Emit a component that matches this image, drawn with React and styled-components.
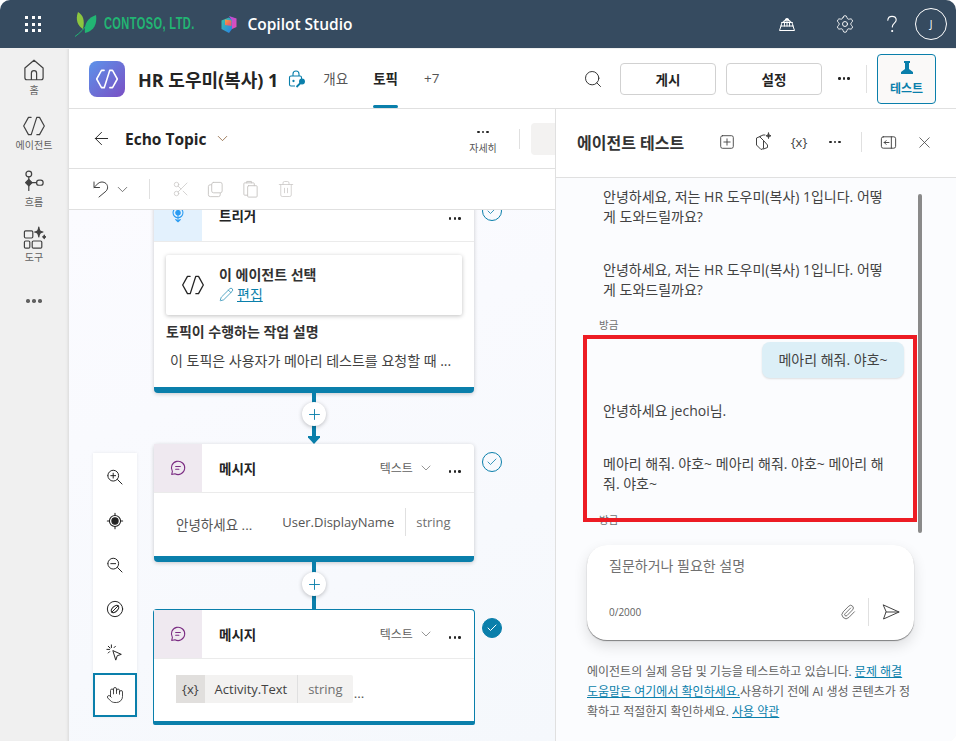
import React from 'react';
import styled, { createGlobalStyle } from 'styled-components';
import { ArrowLeft, ChevronDown, Search, X, Scissors, Trash2, Settings, Paperclip, Pencil, Plus, Check, Hand } from 'lucide-react';

const teal = '#0a7fab';

const GlobalStyle = createGlobalStyle`
  html, body { margin: 0; padding: 0; background: #fff; }
  body { font-family: "Open Sans", "Noto Sans CJK KR", sans-serif; color: #242424; }
  * { box-sizing: border-box; }
`;

const Shell = styled.div`
  width: 956px;
  height: 741px;
  display: flex;
  flex-direction: column;
  overflow: hidden;
  border-radius: 10px 10px 8px 0;
  background: #f0f0f0;
`;

const TopBar = styled.header`
  height: 48px;
  flex: none;
  background: #364b60;
  display: flex;
  align-items: center;
  color: #fff;
  padding-left: 25px;
`;

const Waffle = styled.div`
  display: grid;
  grid-template-columns: repeat(3, 3px);
  gap: 3.5px;
  margin-right: 34px;
  i { width: 3px; height: 3px; background: #fff; }
`;

const Contoso = styled.span`
  font-family: "Liberation Sans", sans-serif;
  font-weight: 700;
  font-size: 17px;
  letter-spacing: 0.6px;
  color: #22b573;
  margin: 0 -23px 0 7px;
  white-space: nowrap;
  transform: scaleX(0.65);
  transform-origin: left center;
`;

const Product = styled.span`
  font-size: 15.5px;
  font-weight: 600;
  margin-left: 8px;
  white-space: nowrap;
`;

const TopIcons = styled.div`
  margin-left: auto;
  display: flex;
  align-items: center;
  padding-right: 9px;
`;

const TopIcon = styled.span`
  width: ${p => p.$w}px;
  height: 32px;
  display: flex;
  align-items: center;
  justify-content: center;
`;

const Avatar = styled.span`
  width: 32px;
  height: 32px;
  border-radius: 50%;
  border: 1px solid #fff;
  display: flex;
  align-items: center;
  justify-content: center;
  font-size: 10px;
`;

const Body = styled.div`
  flex: 1;
  min-height: 0;
  display: flex;
  margin-top: 1px;
`;

const Rail = styled.nav`
  width: 69px;
  flex: none;
  display: flex;
  flex-direction: column;
  align-items: center;
  box-shadow: inset -3px 0 3px -2px #d8d8d8;
`;

const RailItem = styled.div`
  height: 56px;
  width: 100%;
  display: flex;
  flex-direction: column;
  align-items: center;
  justify-content: center;
  gap: 1px;
  font-size: 10px;
  line-height: 13px;
  color: #616161;
  padding-right: 1px;
`;

const Main = styled.main`
  flex: 1;
  min-width: 0;
  display: flex;
  flex-direction: column;
  background: #fff;
`;

const AgentBar = styled.div`
  height: 60px;
  flex: none;
  display: flex;
  align-items: center;
  border-bottom: 1px solid #e0e0e0;
  padding: 0 20px;
`;

const AgentLogo = styled.div`
  width: 36px;
  height: 36px;
  border-radius: 8px;
  background: linear-gradient(135deg, #5c93ea, #7a4fc4);
  display: flex;
  align-items: center;
  justify-content: center;
  flex: none;
`;

const AgentTitle = styled.h1`
  margin: 0 0 0 13px;
  font-size: 18px;
  font-weight: 700;
  white-space: nowrap;
  color: #242424;
`;

const Tab = styled.div`
  height: 59px;
  display: flex;
  align-items: center;
  position: relative;
  font-size: 13.5px;
  margin-left: ${p => p.$gap}px;
  font-weight: ${p => (p.$active ? 700 : 400)};
  color: ${p => (p.$active ? '#242424' : '#555')};
  padding-bottom: 2px;
  ${p => p.$active && `&::after {
    content: '';
    position: absolute;
    left: 0;
    right: 0;
    bottom: 0;
    height: 3px;
    border-radius: 2px;
    background: ${teal};
  }`}
`;

const BarSpacer = styled.div`
  flex: 1;
`;

const OutlineButton = styled.button`
  width: 96px;
  height: 32px;
  margin-left: 10px;
  border: 1px solid #d1d1d1;
  border-radius: 4px;
  background: #fff;
  font: 700 13.5px "Open Sans", "Noto Sans CJK KR", sans-serif;
  color: #242424;
  &:first-of-type { margin-left: 17px; }
`;

const Dots = styled.span`
  display: inline-flex;
  gap: ${p => p.$gap || 2.2}px;
  i {
    width: ${p => p.$size || 2.6}px;
    height: ${p => p.$size || 2.6}px;
    border-radius: 50%;
    background: ${p => p.$color || '#242424'};
  }
`;

const MoreSlot = styled.span`
  width: 44px;
  display: flex;
  justify-content: center;
  flex: none;
`;

const VRule = styled.span`
  width: 1px;
  height: ${p => p.$h || 20}px;
  background: #e0e0e0;
  flex: none;
  margin: ${p => p.$m || 0};
`;

const TestButton = styled.button`
  width: 59px;
  height: 50px;
  margin-left: 10px;
  border: 1px solid ${teal};
  border-radius: 4px;
  background: #faf9f8;
  display: flex;
  flex-direction: column;
  align-items: center;
  justify-content: center;
  gap: 3px;
  padding: 0;
  color: ${teal};
  font: 700 12px "Open Sans", "Noto Sans CJK KR", sans-serif;
`;

const Split = styled.div`
  flex: 1;
  min-height: 0;
  display: flex;
`;

const Editor = styled.section`
  width: 487px;
  flex: none;
  display: flex;
  flex-direction: column;
  border-right: 1px solid #e0e0e0;
  min-width: 0;
`;

const EchoBar = styled.div`
  height: 60px;
  flex: none;
  display: flex;
  align-items: center;
  padding-left: 22px;
  border-bottom: 1px solid #e0e0e0;
  overflow: hidden;
`;

const EchoTitle = styled.span`
  font-size: 15.5px;
  font-weight: 700;
  margin: 0 7px 0 13px;
  color: #242424;
`;

const Details = styled.div`
  margin: 8px 16px 0 auto;
  width: 40px;
  display: flex;
  flex-direction: column;
  align-items: center;
  gap: 9px;
  font-size: 10px;
  line-height: 12px;
  color: #555;
`;

const GhostBox = styled.div`
  width: 24px;
  height: 32px;
  margin-left: 11px;
  border-radius: 4px 0 0 4px;
  background: #f3f2f1;
  flex: none;
`;

const EditBar = styled.div`
  height: 41px;
  flex: none;
  display: flex;
  align-items: center;
  padding-left: 22px;
  border-bottom: 1px solid #e0e0e0;
  color: #c8c6c4;
  svg { flex: none; }
`;

const EditSlot = styled.span`
  width: 35px;
  display: flex;
  justify-content: center;
`;

const Canvas = styled.div`
  flex: 1;
  position: relative;
  overflow: hidden;
  background: linear-gradient(160deg, #fbfbff, #f5f8fc);
`;

const Node = styled.article`
  position: absolute;
  left: ${p => p.$x}px;
  top: ${p => p.$y}px;
  width: ${p => (p.$selected ? 322 : 320)}px;
  height: ${p => p.$h}px;
  background: #fff;
  border-radius: 4px;
  border-bottom: 6px solid ${teal};
  box-shadow: 0 1px 4px rgba(0, 0, 0, 0.2);
  ${p => p.$selected && `border: 1px solid ${teal}; border-bottom-width: 4px; border-radius: 4px 4px 2px 2px; box-shadow: none;`}
`;

const NodeHead = styled.div`
  height: ${p => p.$h || 49}px;
  display: flex;
  align-items: center;
  border-bottom: 1px solid #ebebeb;
  padding-right: 13px;
  font-size: 13.5px;
  font-weight: 700;
`;

const NodeIcon = styled.div`
  width: 48px;
  height: 100%;
  flex: none;
  margin-right: 17px;
  display: flex;
  align-items: center;
  justify-content: center;
  background: ${p => p.$bg};
`;

const NodeType = styled.span`
  margin-left: auto;
  display: flex;
  align-items: center;
  gap: 5px;
  font-size: 12px;
  font-weight: 400;
  color: #616161;
  margin-right: 15px;
`;

const HeadMore = styled.span`
  margin-left: ${p => (p.$auto ? 'auto' : 0)};
`;

const AgentCard = styled.div`
  margin: 13px 12px 0;
  height: 60px;
  display: flex;
  align-items: center;
  padding-left: 15px;
  gap: 14px;
  box-shadow: 0 1px 4px rgba(0, 0, 0, 0.25);
  border-radius: 2px;
`;

const CardName = styled.div`
  font-size: 14px;
  font-weight: 700;
  line-height: 20px;
  color: #333;
  margin-top: -1px;
`;

const EditLink = styled.a`
  display: flex;
  align-items: center;
  gap: 3px;
  font-size: 14px;
  line-height: 20px;
  color: ${teal};
  text-decoration: underline;
`;

const DescTitle = styled.div`
  margin: 8px 12px 0;
  font-size: 14px;
  font-weight: 700;
  color: #333;
  line-height: 18px;
`;

const DescText = styled.div`
  margin: 11px 16px 0;
  font-size: 14px;
  line-height: 18px;
  color: #424242;
  white-space: nowrap;
`;

const MessageRow = styled.div`
  display: flex;
  align-items: center;
  height: 62px;
  padding-left: 22px;
  font-size: 13.5px;
  color: #555;
`;

const VarName = styled.span`
  margin-left: 30px;
  margin-top: -5px;
  white-space: nowrap;
  font-size: 13px;
`;

const VarType = styled.span`
  margin-left: 11px;
  margin-top: -5px;
  padding-left: 10px;
  height: 28px;
  line-height: 28px;
  border-left: 1px solid #e0e0e0;
  color: #707070;
  font-size: 13px;
`;

const Pill = styled.div`
  display: flex;
  align-items: stretch;
  height: 28px;
  margin-top: -3px;
  background: #f3f2f1;
  border-radius: 2px;
  line-height: 28px;
  font-size: 13px;
`;

const PillPart = styled.span`
  padding: 0 ${p => (p.$dark ? 6 : 10)}px;
  color: ${p => (p.$muted ? '#707070' : '#424242')};
  background: ${p => (p.$dark ? '#e1dfdd' : 'transparent')};
  border-left: ${p => (p.$rule ? '1px solid #e0e0e0' : 0)};
`;

const Trail = styled.span`
  margin: 6px 0 0 1px;
`;

const Wire = styled.div`
  position: absolute;
  left: ${p => p.$x}px;
  top: ${p => p.$y}px;
  width: 4px;
  height: ${p => p.$h}px;
  background: ${teal};
`;

const WireHead = styled.div`
  position: absolute;
  left: 239px;
  top: 226px;
  width: 12px;
  height: 8px;
  background: ${teal};
  clip-path: polygon(0 0, 100% 0, 100% 20%, 50% 100%, 0 20%);
`;

const AddButton = styled.div`
  position: absolute;
  left: ${p => p.$x}px;
  top: ${p => p.$y}px;
  width: 24px;
  height: 24px;
  border-radius: 50%;
  background: #fff;
  box-shadow: 0 1px 4px rgba(0, 0, 0, 0.25);
  display: flex;
  align-items: center;
  justify-content: center;
  color: ${teal};
`;

const Status = styled.div`
  position: absolute;
  left: ${p => p.$x}px;
  top: ${p => p.$y}px;
  width: 20px;
  height: 20px;
  border-radius: 50%;
  border: 1.5px solid ${teal};
  background: ${p => (p.$filled ? teal : 'transparent')};
  color: ${p => (p.$filled ? '#fff' : teal)};
  display: flex;
  align-items: center;
  justify-content: center;
`;

const ZoomTools = styled.div`
  position: absolute;
  left: 24px;
  top: 243px;
  width: 44px;
  background: #fff;
  box-shadow: 0 0 3px rgba(0, 0, 0, 0.08);
`;

const ZoomButton = styled.div`
  height: 44px;
  display: flex;
  align-items: center;
  justify-content: center;
  padding-top: ${p => (p.$active ? 0 : 4)}px;
  border: ${p => (p.$active ? `2px solid ${teal}` : 0)};
`;

const TestPanel = styled.aside`
  flex: 1;
  min-width: 0;
  position: relative;
  display: flex;
  flex-direction: column;
  background: #fbfcfe;
  overflow: hidden;
`;

const TestHead = styled.div`
  height: 69px;
  flex: none;
  display: flex;
  align-items: center;
  padding: 0 0 2px 20px;
  background: #fff;
  border-bottom: 1px solid #e0e0e0;
`;

const TestTitle = styled.h2`
  margin: 0 17px 0 1px;
  font-size: 16px;
  font-weight: 700;
  color: #333;
  white-space: nowrap;
  width: 115px;
`;

const HeadSlot = styled.span`
  width: 36px;
  display: flex;
  justify-content: center;
  align-items: center;
  font-size: 13px;
  color: #424242;
`;

const Messages = styled.div`
  flex: 1;
  min-height: 0;
  overflow: hidden;
  padding: 9px 46px 0 47px;
  font-size: 14px;
  line-height: 20px;
  color: #424242;
`;

const BotText = styled.p`
  margin: 0 0 ${p => p.$after}px;
  width: 290px;
`;

const Stamp = styled.div`
  font-size: 10.5px;
  line-height: 14px;
  color: #707070;
  margin-left: -4px;
`;

const UserBubble = styled.div`
  width: 142px;
  height: 36px;
  margin: 10px 0 23px 159px;
  background: #dceff7;
  border-radius: 8px;
  display: flex;
  align-items: center;
  justify-content: center;
  box-shadow: 0 1px 2px rgba(0, 0, 0, 0.12);
  white-space: nowrap;
`;

const RedFrame = styled.div`
  position: absolute;
  left: 27px;
  top: 226px;
  width: 334px;
  height: 187px;
  border: 4px solid #ed1c24;
`;

const Thumb = styled.div`
  position: absolute;
  right: 34px;
  top: 85px;
  width: 4px;
  height: 339px;
  border-radius: 2px;
  background: #8a8a8a;
`;

const Composer = styled.div`
  flex: none;
  width: 327px;
  height: 95px;
  margin: 0 0 0 31px;
  background: #fff;
  border-radius: 20px;
  box-shadow: 0 1px 1px rgba(0, 0, 0, 0.45), 0 6px 14px rgba(0, 0, 0, 0.12);
  padding: 11px 13px 0 22px;
  display: flex;
  flex-direction: column;
`;

const Placeholder = styled.div`
  font-size: 14px;
  line-height: 20px;
  color: #707070;
`;

const ComposerFoot = styled.div`
  display: flex;
  align-items: center;
  margin-top: 22px;
  font-size: 10px;
  color: #616161;
  gap: 12px;
`;

const Count = styled.span`
  margin-right: auto;
`;

const Disclaimer = styled.p`
  flex: none;
  margin: 22px 0 19px 31px;
  width: 326px;
  font-size: 12px;
  line-height: 20px;
  color: #616161;
  a { color: ${teal}; text-decoration: underline; }
`;

const Glyph = ({ d, size = 20, color = 'currentColor', sw = 1.2, children, fill = 'none' }) => (
  <svg width={size} height={size} viewBox="0 0 20 20" fill={fill} stroke={color} strokeWidth={sw} strokeLinecap="round" strokeLinejoin="round">
    {d && <path d={d} />}
    {children}
  </svg>
);

const ThreeDots = ({ size, color, gap }) => (
  <Dots $size={size} $color={color} $gap={gap}><i /><i /><i /></Dots>
);

const AgentGlyph = ({ size = 20, color = '#242424', sw = 1.3 }) => (
  <Glyph size={size} color={color} sw={sw}>
    <path d="M7.600 2.800H5.400L1.400 10l4 7.200h2.200M12.400 2.800h2.200l4 7.200-4 7.200h-2.200M12.300 2.800 7.700 17.200" />
  </Glyph>
);

const MessageGlyph = () => (
  <Glyph size={18} color="#7b2d83" sw={1.2}>
    <path d="M3 17.200 3.800 13.800A7.400 7.400 0 1 1 6.600 16.400Z" />
    <path d="M7.400 8.300h5.200M7.400 11.300h3.600" />
  </Glyph>
);

const Copilot = () => (
  <svg width="19" height="19" viewBox="0 0 19 19">
    <defs>
      <linearGradient id="cpA" x1="0" y1="0" x2="1" y2="1"><stop offset="0" stopColor="#f2a33a" /><stop offset="1" stopColor="#e8477e" /></linearGradient>
      <linearGradient id="cpB" x1="0" y1="0" x2="1" y2="1"><stop offset="0" stopColor="#b14de0" /><stop offset="1" stopColor="#e64fb0" /></linearGradient>
      <linearGradient id="cpC" x1="0" y1="0" x2="1" y2="1"><stop offset="0" stopColor="#35c6a8" /><stop offset="1" stopColor="#2a7fe6" /></linearGradient>
    </defs>
    <path d="M9 1 16.500 3.500V12L12 14V6Z" fill="url(#cpB)" />
    <path d="M1.500 5.500 9 2.500 12 5V14L9 18 1.500 14Z" fill="url(#cpC)" />
    <path d="M5 4.500 11.500 5.500 11.500 11 5 10Z" fill="url(#cpA)" />
  </svg>
);

const Leaf = () => (
  <svg width="22" height="25" viewBox="0 0 22 25">
    <path d="M3 0c5 3 7 8 5 17C3 14 0 8 3 0Z" fill="#8cc63f" />
    <path d="M21 3c1.500 10-3 16-11 18-1-8 2-15 11-18Z" fill="#22b573" />
    <path d="M0 24.500C5 21 10 16 14 10" stroke="#22b573" strokeWidth="1" fill="none" />
  </svg>
);

export default function App() {
  return (
    <>
      <GlobalStyle />
      <Shell>
        <TopBar>
          <Waffle>{Array.from({ length: 9 }, (_, i) => <i key={i} />)}</Waffle>
          <Leaf />
          <Contoso>CONTOSO, LTD.</Contoso>
          <Copilot />
          <Product>Copilot Studio</Product>
          <TopIcons>
            <TopIcon $w={69}>
              <Glyph size={20} color="#fff" sw={1}>
                <path d="M4 12a6 6 0 1 1 12 0" />
                <path d="M10 6c-2.800 0-2.800 6-2.400 6M10 6c2.800 0 2.800 6 2.400 6M10 6v6" transform="translate(0 -3) scale(1 1.250)" />
                <path d="M4.600 8.500h10.800M4 12h12" />
                <path d="M4 12 2.500 16.500h15L16 12" />
              </Glyph>
            </TopIcon>
            <TopIcon $w={47}><Settings size={20} strokeWidth={1.1} /></TopIcon>
            <TopIcon $w={47}>
              <Glyph size={20} color="#fff" sw={1.1}>
                <path d="M5.800 6.300C6 3.800 7.800 2.400 10 2.400c2.400 0 4.200 1.600 4.200 3.700 0 3-3.900 3.200-3.900 6.800" />
                <circle cx="10.200" cy="17" r=".5" fill="#fff" />
              </Glyph>
            </TopIcon>
            <Avatar>J</Avatar>
          </TopIcons>
        </TopBar>

        <Body>
          <Rail>
            <RailItem>
              <Glyph size={26} color="#424242" sw={0.95} d="M8 17.500v-5a2 2 0 0 1 4 0v5M3 8.500 10 2.500l7 6v7.500a1.500 1.500 0 0 1-1.500 1.500h-11A1.500 1.500 0 0 1 3 16Z" />
              <span>홈</span>
            </RailItem>
            <RailItem>
              <AgentGlyph size={24} color="#424242" sw={1} />
              <span>에이전트</span>
            </RailItem>
            <RailItem>
              <Glyph size={26} color="#424242" sw={0.95}>
                <circle cx="6" cy="3.800" r="2.200" />
                <path d="M6 6v2M6 13v3.500" />
                <path d="M6 8l2.500 2.500L6 13l-2.500-2.500Z" fill="#424242" />
                <rect x="12" y="8.500" width="5" height="4" rx="1.800" />
                <path d="M8.500 10.500H12" />
              </Glyph>
              <span>흐름</span>
            </RailItem>
            <RailItem>
              <Glyph size={24} color="#424242" sw={1}>
                <rect x="2" y="4" width="7" height="6" rx="1" />
                <rect x="2" y="12.500" width="4.500" height="6" rx="1" />
                <rect x="8.500" y="12.500" width="8" height="6" rx="1" />
                <path d="M14 1c.4 3 1 3.700 3.500 4-2.500.4-3.100 1-3.500 4-.4-3-1-3.600-3.500-4 2.500-.3 3.100-1 3.500-4Z" fill="#424242" />
                <path d="M18.500 7.500c.2 1 .5 1.300 1.300 1.500-.8.2-1.100.5-1.300 1.500-.2-1-.5-1.300-1.300-1.500.8-.2 1.100-.5 1.300-1.500Z" fill="#424242" />
              </Glyph>
              <span>도구</span>
            </RailItem>
            <RailItem><ThreeDots size={3.400} gap={2.500} color="#616161" /></RailItem>
          </Rail>

          <Main>
            <AgentBar>
              <AgentLogo><AgentGlyph size={24} color="#fff" sw={1.3} /></AgentLogo>
              <AgentTitle>HR 도우미(복사) 1</AgentTitle>
              <svg width="18" height="18" viewBox="0 0 18 18" style={{ marginLeft: 10, flex: 'none' }} fill="none" stroke={teal} strokeWidth="1.1">
                <path d="M5 6V4a3 3 0 0 1 6 0v2" />
                <path d="M7 16H3a1.500 1.500 0 0 1-1.500-1.500v-7A1.500 1.500 0 0 1 3 6h9a1.500 1.500 0 0 1 1.500 1.500V9" />
                <circle cx="5.500" cy="11" r=".6" fill={teal} />
                <circle cx="14" cy="11.500" r="2.400" fill={teal} />
                <path d="M12.500 13 8.500 17" strokeWidth="1.800" />
              </svg>
              <Tab $gap={17}>개요</Tab>
              <Tab $gap={25} $active>토픽</Tab>
              <Tab $gap={26}>+7</Tab>
              <BarSpacer />
              <Search size={20} strokeWidth={1.1} color="#242424" />
              <OutlineButton>게시</OutlineButton>
              <OutlineButton>설정</OutlineButton>
              <MoreSlot><ThreeDots /></MoreSlot>
              <VRule $h={28} />
              <TestButton>
                <svg width="14" height="15" viewBox="0 0 14 15" fill={teal}>
                  <path d="M4 0h6v2H9v6l4 3v2H1v-2l4-3V2H4Z" />
                </svg>
                테스트
              </TestButton>
            </AgentBar>

            <Split>
              <Editor>
                <EchoBar>
                  <ArrowLeft size={21} strokeWidth={1.1} color="#242424" />
                  <EchoTitle>Echo Topic</EchoTitle>
                  <ChevronDown size={17} strokeWidth={1} color="#7a4a1f" />
                  <Details><ThreeDots />자세히</Details>
                  <VRule />
                  <GhostBox />
                </EchoBar>
                <EditBar>
                  <Glyph size={20} color="#424242" sw={1} d="M3 3v5.500h5.500M3 8.500 7 4.500a6 6 0 0 1 8 0c2.500 2.500 2 6.500-1 8.500L8 18" />
                  <ChevronDown size={17} strokeWidth={1} color="#424242" style={{ marginLeft: 3 }} />
                  <VRule $m="0 13px 0 18px" />
                  <EditSlot><Scissors size={18} strokeWidth={1} /></EditSlot>
                  <EditSlot>
                    <Glyph size={19} sw={1}>
                      <rect x="6" y="2.500" width="11" height="11" rx="2" />
                      <path d="M6 5H4.500A2 2 0 0 0 2.500 7v8.500a2 2 0 0 0 2 2H13a2 2 0 0 0 2-2V14" />
                    </Glyph>
                  </EditSlot>
                  <EditSlot>
                    <Glyph size={19} sw={1}>
                      <rect x="7" y="6" width="10" height="12" rx="1" />
                      <path d="M7 16H4a1 1 0 0 1-1-1V4a1 1 0 0 1 1-1h9a1 1 0 0 1 1 1v2M6 3V1.500h5V3" />
                    </Glyph>
                  </EditSlot>
                  <EditSlot><Trash2 size={18} strokeWidth={1} /></EditSlot>
                </EditBar>

                <Canvas>
                  <Node $x={85} $y={-21} $h={204}>
                    <NodeHead $h={53}>
                      <NodeIcon $bg="#e3f1fd">
                        <Glyph size={18} color="#2b9cf2" sw={1.2}>
                          <circle cx="10" cy="7.500" r="5.500" />
                          <circle cx="10" cy="7.500" r="2.500" fill="#2b9cf2" />
                          <path d="M10 9v8.500M7.500 15l2.500 2.500 2.500-2.500" />
                        </Glyph>
                      </NodeIcon>
                      트리거
                      <HeadMore $auto><ThreeDots /></HeadMore>
                    </NodeHead>
                    <AgentCard>
                      <AgentGlyph size={24} sw={1.1} />
                      <div>
                        <CardName>이 에이전트 선택</CardName>
                        <EditLink><Pencil size={15} strokeWidth={1.1} />편집</EditLink>
                      </div>
                    </AgentCard>
                    <DescTitle>토픽이 수행하는 작업 설명</DescTitle>
                    <DescText>이 토픽은 사용자가 메아리 테스트를 요청할 때 ...</DescText>
                  </Node>
                  <Status $x={413} $y={-9}><Check size={12} strokeWidth={1.6} /></Status>

                  <Wire $x={243} $y={183} $h={48} />
                  <WireHead />
                  <AddButton $x={233} $y={192}><Plus size={17} strokeWidth={1.3} /></AddButton>

                  <Node $x={85} $y={234} $h={118}>
                    <NodeHead>
                      <NodeIcon $bg="#efe9f0"><MessageGlyph /></NodeIcon>
                      메시지
                      <NodeType>텍스트 <ChevronDown size={16} strokeWidth={1} /></NodeType>
                      <HeadMore><ThreeDots /></HeadMore>
                    </NodeHead>
                    <MessageRow>
                      안녕하세요 ...
                      <VarName>User.DisplayName</VarName>
                      <VarType>string</VarType>
                    </MessageRow>
                  </Node>
                  <Status $x={413} $y={242}><Check size={12} strokeWidth={1.6} /></Status>

                  <Wire $x={243} $y={352} $h={48} />
                  <AddButton $x={233} $y={362}><Plus size={17} strokeWidth={1.3} /></AddButton>

                  <Node $x={84} $y={399} $h={116} $selected>
                    <NodeHead>
                      <NodeIcon $bg="#efe9f0"><MessageGlyph /></NodeIcon>
                      메시지
                      <NodeType>텍스트 <ChevronDown size={16} strokeWidth={1} /></NodeType>
                      <HeadMore><ThreeDots /></HeadMore>
                    </NodeHead>
                    <MessageRow>
                      <Pill>
                        <PillPart $dark>{'{x}'}</PillPart>
                        <PillPart>Activity.Text</PillPart>
                        <PillPart $muted $rule>string</PillPart>
                      </Pill>
                      <Trail>...</Trail>
                    </MessageRow>
                  </Node>
                  <Status $x={413} $y={408} $filled><Check size={12} strokeWidth={2} /></Status>

                  <ZoomTools>
                    <ZoomButton>
                      <Glyph size={18} color="#242424" sw={1.1} d="M2 8.500a6 6 0 1 0 12 0 6 6 0 1 0-12 0M12.800 12.800l5 5M8 5.800v5.400M5.300 8.500h5.400" />
                    </ZoomButton>
                    <ZoomButton>
                      <Glyph size={18} color="#242424" sw={1.2}>
                        <circle cx="10" cy="10" r="6.200" />
                        <circle cx="10" cy="10" r="3.500" fill="#242424" />
                        <path d="M10 1.500v2M10 16.500v2M1.500 10h2M16.500 10h2" />
                      </Glyph>
                    </ZoomButton>
                    <ZoomButton>
                      <Glyph size={18} color="#242424" sw={1.1} d="M2 8.500a6 6 0 1 0 12 0 6 6 0 1 0-12 0M12.800 12.800l5 5M5.300 8.500h5.400" />
                    </ZoomButton>
                    <ZoomButton>
                      <Glyph size={18} color="#242424" sw={1.1}>
                        <circle cx="10" cy="10" r="8.500" />
                        <ellipse cx="10" cy="10" rx="5" ry="2.800" transform="rotate(-45 10 10)" />
                        <path d="M6.500 13.500 13.500 6.500" />
                      </Glyph>
                    </ZoomButton>
                    <ZoomButton>
                      <Glyph size={18} color="#242424" sw={1.1} d="M8 7.500 17 11.500 12.500 13 11 17.500ZM6 1v3M1 6h3M2.500 2.500l2 2M10.500 2.500l-1.500 1.500M2.500 10l1.500-1.500" />
                    </ZoomButton>
                    <ZoomButton $active><Hand size={18} strokeWidth={1.1} color="#242424" /></ZoomButton>
                  </ZoomTools>
                </Canvas>
              </Editor>

              <TestPanel>
                <TestHead>
                  <TestTitle>에이전트 테스트</TestTitle>
                  <HeadSlot>
                    <Glyph size={18} color="#424242" sw={1}>
                      <rect x="3" y="3" width="14" height="14" rx="2" />
                      <path d="M10 6.500v7M6.500 10h7" />
                    </Glyph>
                  </HeadSlot>
                  <HeadSlot>
                    <Glyph size={20} color="#424242" sw={1}>
                      <path d="M7 4.500 3.500 6v7L8 17.500l2.500-1V8.500L7 5ZM7 4.500l3-1.500h2M10.500 8.500l4 4.500v2.500l-4 1.500" />
                      <path d="M15.500 1c.3 2 .8 2.500 2.500 2.800-1.700.3-2.200.8-2.500 2.700-.3-1.900-.8-2.400-2.500-2.700 1.700-.3 2.200-.8 2.500-2.800Z" fill="#424242" />
                    </Glyph>
                  </HeadSlot>
                  <HeadSlot>{'{x}'}</HeadSlot>
                  <HeadSlot><ThreeDots /></HeadSlot>
                  <VRule $m="0 8px" />
                  <HeadSlot>
                    <Glyph size={19} color="#424242" sw={1}>
                      <rect x="2.500" y="4" width="15" height="12" rx="2" />
                      <path d="M13 4v12M10.500 10h-5M7.500 8l-2 2 2 2" />
                    </Glyph>
                  </HeadSlot>
                  <HeadSlot><X size={19} strokeWidth={1} color="#424242" /></HeadSlot>
                </TestHead>

                <Messages>
                  <BotText $after={33}>안녕하세요, 저는 HR 도우미(복사) 1입니다. 어떻게 도와드릴까요?</BotText>
                  <BotText $after={18}>안녕하세요, 저는 HR 도우미(복사) 1입니다. 어떻게 도와드릴까요?</BotText>
                  <Stamp>방금</Stamp>
                  <UserBubble>메아리 해줘. 야호~</UserBubble>
                  <BotText $after={33}>안녕하세요 jechoi님.</BotText>
                  <BotText $after={19}>메아리 해줘. 야호~ 메아리 해줘. 야호~ 메아리 해줘. 야호~</BotText>
                  <Stamp>방금</Stamp>
                </Messages>

                <Composer>
                  <Placeholder>질문하거나 필요한 설명</Placeholder>
                  <ComposerFoot>
                    <Count>0/2000</Count>
                    <Paperclip size={16} strokeWidth={1.1} color="#424242" />
                    <VRule $h={28} />
                    <Glyph size={20} color="#424242" sw={1} d="M2.500 3 18 10 2.500 17 5 10ZM5 10h13" />
                  </ComposerFoot>
                </Composer>

                <Disclaimer>
                  에이전트의 실제 응답 및 기능을 테스트하고 있습니다. <a>문제 해결 도움말은 여기에서 확인하세요.</a>사용하기 전에 AI 생성 콘텐츠가 정확하고 적절한지 확인하세요. <a>사용 약관</a>
                </Disclaimer>

                <Thumb />
                <RedFrame />
              </TestPanel>
            </Split>
          </Main>
        </Body>
      </Shell>
    </>
  );
}
